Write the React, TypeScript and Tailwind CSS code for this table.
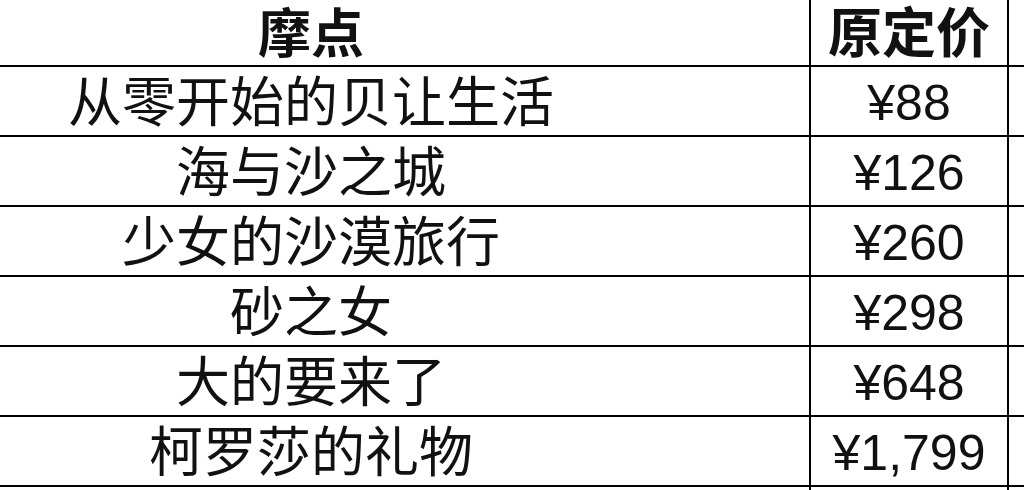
import { Fragment } from "react";

const rows = [
  { name: "从零开始的贝让生活", price: "¥88" },
  { name: "海与沙之城", price: "¥126" },
  { name: "少女的沙漠旅行", price: "¥260" },
  { name: "砂之女", price: "¥298" },
  { name: "大的要来了", price: "¥648" },
  { name: "柯罗莎的礼物", price: "¥1,799" },
];

const font = { fontFamily: '"Liberation Sans", "Noto Sans CJK SC", sans-serif' };

export default function App() {
  return (
    <div className="h-[490px] w-[1024px] overflow-hidden bg-white text-[#111]" style={font}>
      <div className="ml-[-187px] grid grid-cols-[998px_198px_40px]">
        <div className="flex h-[65px] items-center justify-center border-r-2 border-black pt-1 text-[53px] font-bold">
          摩点
        </div>
        <div className="flex h-[65px] items-center justify-center border-r-2 border-black pt-1 text-[54px] font-bold">
          原定价
        </div>
        <div className="h-[65px]" />
        {rows.map((r) => (
          <Fragment key={r.name}>
            <div className="flex h-[70px] items-center justify-center border-t-2 border-r-2 border-black pt-1 text-[54px]">
              {r.name}
            </div>
            <div className="flex h-[70px] items-center justify-center border-t-2 border-r-2 border-black pt-1 text-[50px]">
              {r.price}
            </div>
            <div className="h-[70px] border-t-2 border-black" />
          </Fragment>
        ))}
        <div className="h-[10px] border-t-2 border-r-2 border-black" />
        <div className="h-[10px] border-t-2 border-r-2 border-black" />
        <div className="h-[10px] border-t-2 border-black" />
      </div>
    </div>
  );
}
